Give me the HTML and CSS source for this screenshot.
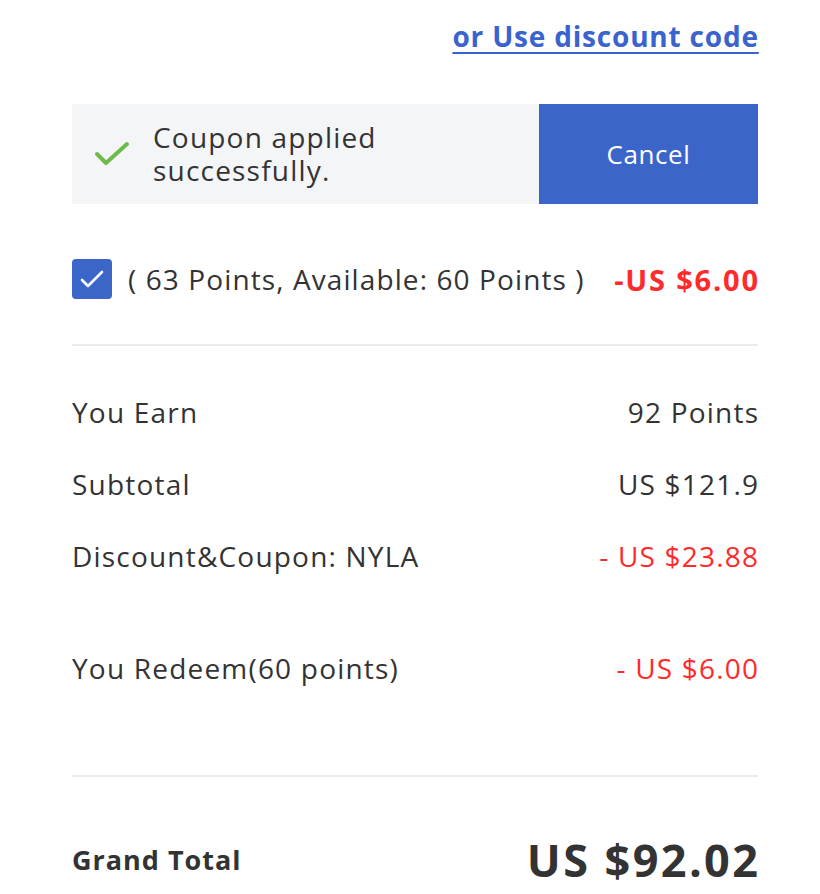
FILE: index.html
```html
<!DOCTYPE html>
<html lang="en">
<head>
    <meta charset="UTF-8">
    <meta name="viewport" content="width=device-width, initial-scale=1.0">
    <title>Order Summary</title>
    <link rel="stylesheet" href="styles.css">
</head>
<body>
    <main class="resumo">
        <div class="topo">
            <a href="#" class="codigo">or Use discount code</a>
        </div>

        <div class="cupom">
            <div class="cupom-msg">
                <svg class="ok" width="36" height="26" viewBox="0 0 36 26">
                    <path d="M3 13 L12 22 L33 3" fill="none" stroke="#6dbb4b" stroke-width="4" stroke-linecap="round" stroke-linejoin="round"/>
                </svg>
                <p>Coupon applied<br>successfully.</p>
            </div>
            <button type="button" class="cancelar">Cancel</button>
        </div>

        <label class="pontos">
            <span class="caixa">
                <svg width="26" height="20" viewBox="0 0 26 20">
                    <path d="M3 11 L9 17 L23 3" fill="none" stroke="#fff" stroke-width="2.6" stroke-linecap="round" stroke-linejoin="round"/>
                </svg>
            </span>
            <span class="pontos-txt">( 63 Points, Available: 60 Points )</span>
            <span class="pontos-valor">-US $6.00</span>
        </label>

        <hr class="linha">

        <div class="linhas">
            <div class="item"><span>You Earn</span><span class="dir">92 Points</span></div>
            <div class="item"><span>Subtotal</span><span class="dir">US $121.9</span></div>
            <div class="item"><span>Discount&amp;Coupon: NYLA</span><span class="dir menos">- US $23.88</span></div>
            <div class="item redeem"><span>You Redeem(60 points)</span><span class="dir menos">- US $6.00</span></div>
        </div>

        <hr class="linha linha2">

        <div class="total">
            <span class="total-rot">Grand Total</span>
            <span class="total-valor">US $92.02</span>
        </div>
    </main>
</body>
</html>
```

FILE: styles.css
```css
*, *::before, *::after
{
    box-sizing: border-box;
    margin: 0;
    padding: 0;
}
body
{
    background: #fff;
    font-family: "Open Sans", Lato, sans-serif;
    color: #333;
}
.resumo
{
    width: 820px;
    padding: 16px 62px 0 72px;
}
.topo
{
    display: flex;
    justify-content: flex-end;
}
.codigo
{
    color: #3a63d0;
    font-weight: bold;
    font-size: 28px;
    line-height: 40px;
    letter-spacing: 0.8px;
    margin-right: -0.8px;
    text-decoration: underline;
    text-decoration-thickness: 2px;
    text-underline-offset: 5px;
}
.cupom
{
    margin-top: 48px;
    display: flex;
    height: 100px;
    background-color: #f4f5f7;
}
.cupom-msg
{
    flex: 1;
    display: flex;
    align-items: center;
    padding-left: 22px;
    gap: 23px;
}
.cupom-msg p
{
    font-size: 28px;
    line-height: 33px;
    letter-spacing: 1.2px;
    color: #333;
}
.cancelar
{
    width: 219px;
    border: none;
    background-color: #3b65c9;
    color: #fff;
    font-family: inherit;
    font-weight: 500;
    font-size: 26px;
    letter-spacing: 0.6px;
}
.pontos
{
    margin-top: 55px;
    display: flex;
    align-items: center;
    height: 40px;
}
.caixa
{
    width: 40px;
    height: 40px;
    border-radius: 4px;
    background-color: #3b65c9;
    display: flex;
    align-items: center;
    justify-content: center;
}
.pontos-txt
{
    margin-left: 16px;
    font-size: 28px;
    letter-spacing: 1.1px;
    flex: 1;
}
.pontos-valor
{
    color: #ff2a2a;
    font-weight: bold;
    font-size: 29px;
    letter-spacing: 1.8px;
    margin-right: -1.8px;
}
.linha
{
    border: none;
    border-top: 2px solid #ebebeb;
    margin-top: 45px;
}
.linhas
{
    padding-top: 30px;
}
.item
{
    display: flex;
    justify-content: space-between;
    align-items: center;
    height: 72px;
    font-size: 28px;
    letter-spacing: 1.2px;
}
.item .dir
{
    margin-right: -1.2px;
}
.item.redeem
{
    margin-top: 40px;
}
.menos
{
    color: #ff2a2a;
}
.linha2
{
    margin-top: 71px;
}
.total
{
    display: flex;
    justify-content: space-between;
    align-items: center;
    margin-top: 52px;
}
.total-rot
{
    font-weight: bold;
    font-size: 27px;
    letter-spacing: 1px;
}
.total-valor
{
    font-weight: bold;
    font-size: 45px;
    letter-spacing: 2.4px;
    margin-right: -2.4px;
}
```
